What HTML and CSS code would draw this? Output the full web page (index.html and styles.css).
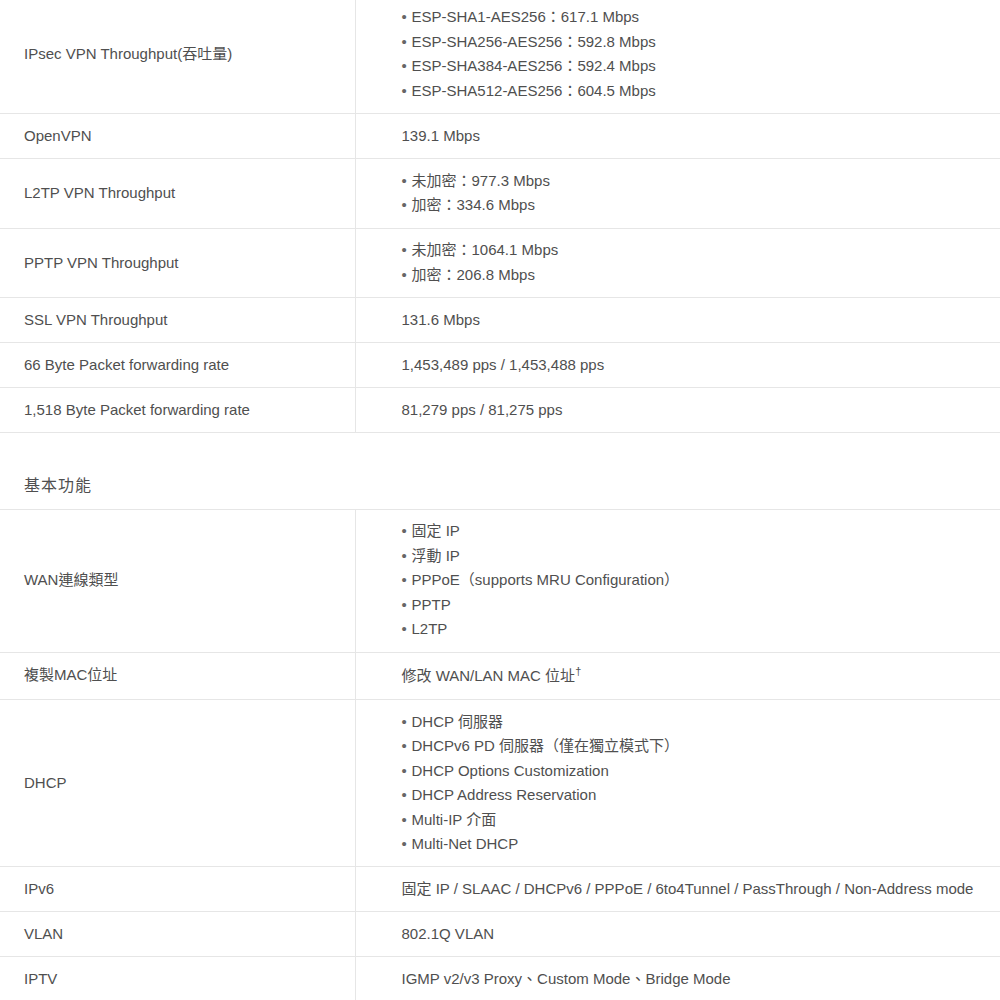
FILE: index.html
```html
<!DOCTYPE html>
<html lang="zh-Hant">
<head>
<meta charset="utf-8">
<title>規格</title>
<link rel="stylesheet" href="styles.css">
</head>
<body>
<div class="page">
<table class="spec">
  <colgroup><col class="c-label"><col class="c-value"></colgroup>
  <tbody>
    <tr>
      <td class="label">IPsec VPN Throughput(吞吐量)</td>
      <td class="value">
        <ul class="list">
          <li>ESP-SHA1-AES256：617.1 Mbps</li>
          <li>ESP-SHA256-AES256：592.8 Mbps</li>
          <li>ESP-SHA384-AES256：592.4 Mbps</li>
          <li>ESP-SHA512-AES256：604.5 Mbps</li>
        </ul>
      </td>
    </tr>
    <tr>
      <td class="label">OpenVPN</td>
      <td class="value">139.1 Mbps</td>
    </tr>
    <tr>
      <td class="label">L2TP VPN Throughput</td>
      <td class="value">
        <ul class="list">
          <li>未加密：977.3 Mbps</li>
          <li>加密：334.6 Mbps</li>
        </ul>
      </td>
    </tr>
    <tr>
      <td class="label">PPTP VPN Throughput</td>
      <td class="value">
        <ul class="list">
          <li>未加密：1064.1 Mbps</li>
          <li>加密：206.8 Mbps</li>
        </ul>
      </td>
    </tr>
    <tr>
      <td class="label">SSL VPN Throughput</td>
      <td class="value">131.6 Mbps</td>
    </tr>
    <tr>
      <td class="label">66 Byte Packet forwarding rate</td>
      <td class="value">1,453,489 pps / 1,453,488 pps</td>
    </tr>
    <tr>
      <td class="label">1,518 Byte Packet forwarding rate</td>
      <td class="value">81,279 pps / 81,275 pps</td>
    </tr>
    <tr class="section">
      <td colspan="2" class="section-title">基本功能</td>
    </tr>
    <tr>
      <td class="label">WAN連線類型</td>
      <td class="value">
        <ul class="list">
          <li>固定 IP</li>
          <li>浮動 IP</li>
          <li>PPPoE（supports MRU Configuration）</li>
          <li>PPTP</li>
          <li>L2TP</li>
        </ul>
      </td>
    </tr>
    <tr>
      <td class="label">複製MAC位址</td>
      <td class="value value-sup">修改 WAN/LAN MAC 位址<sup class="dag">†</sup></td>
    </tr>
    <tr>
      <td class="label">DHCP</td>
      <td class="value">
        <ul class="list">
          <li>DHCP 伺服器</li>
          <li>DHCPv6 PD 伺服器（僅在獨立模式下）</li>
          <li>DHCP Options Customization</li>
          <li>DHCP Address Reservation</li>
          <li>Multi-IP 介面</li>
          <li>Multi-Net DHCP</li>
        </ul>
      </td>
    </tr>
    <tr>
      <td class="label">IPv6</td>
      <td class="value">固定 IP / SLAAC / DHCPv6 / PPPoE / 6to4Tunnel / PassThrough / Non-Address mode</td>
    </tr>
    <tr>
      <td class="label">VLAN</td>
      <td class="value">802.1Q VLAN</td>
    </tr>
    <tr>
      <td class="label">IPTV</td>
      <td class="value">IGMP v2/v3 Proxy、Custom Mode、Bridge Mode</td>
    </tr>
  </tbody>
</table>
</div>
</body>
</html>
```

FILE: styles.css
```css
html, body {
  margin: 0;
  padding: 0;
  background: #ffffff;
}

body {
  font-family: "Liberation Sans", Arial, "Noto Sans CJK TC", sans-serif;
  font-size: 15px;
  color: #4f4f4f;
  text-spacing-trim: space-all;
}

.page {
  width: 1000px;
  margin-top: -4.5px;
}

.spec {
  width: 1000px;
  border-collapse: collapse;
  table-layout: fixed;
}

.c-label {
  width: 355px;
}

.spec td {
  border-bottom: 1px solid #e6e6e6;
  line-height: 24.5px;
  vertical-align: middle;
}

.label {
  padding: 9.75px 24px;
  border-right: 1px solid #e6e6e6;
}

.value {
  padding: 9.75px 24px 9.75px 46px;
}

.value-sup {
  padding-top: 11.75px;
  padding-bottom: 10px;
}

.list {
  list-style: none;
  margin: 0;
  padding: 0;
}

.list li {
  line-height: 24.5px;
}

.list li::before {
  content: "•";
  color: #666666;
  display: inline-block;
  width: 10px;
}

.section-title {
  padding: 41px 24px 10px;
  font-size: 16px;
  letter-spacing: 1px;
}

.dag {
  font-size: 11px;
  line-height: 0;
  vertical-align: 6px;
}
```
